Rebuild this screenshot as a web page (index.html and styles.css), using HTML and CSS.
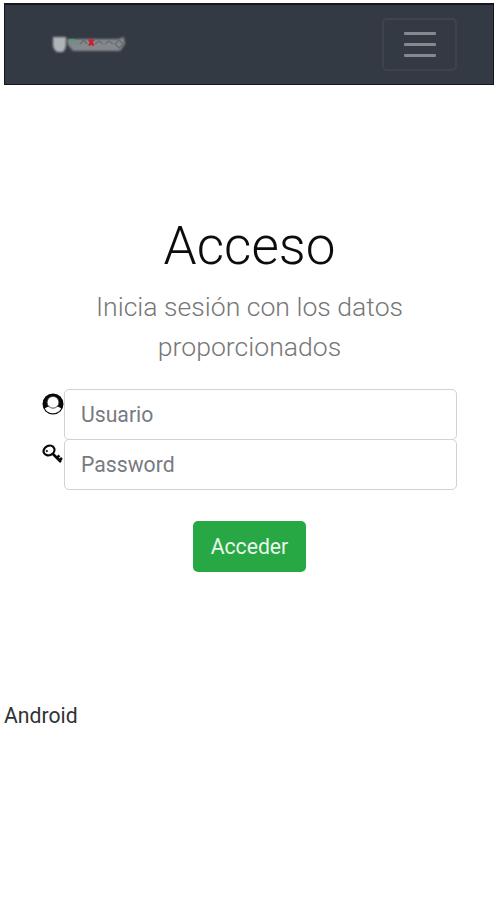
FILE: index.html
```html
<!DOCTYPE html>
<html lang="es">
<head>
<meta charset="utf-8">
<title>Acceso</title>
<link rel="stylesheet" href="styles.css">
</head>
<body>
<header class="navbar">
  <svg class="logo" width="84" height="28" viewBox="0 0 84 28" aria-hidden="true">
    <g class="logo-soft">
      <path d="M6 6h13v8q0 4-3 7h-6q-4-3-4-7z" fill="#b0b3b8"/>
      <path d="M20 8h51l6-2 1 7-5 7H26l-5-6z" fill="#85888d"/>
    </g>
    <g class="logo-detail" fill="none" stroke-width="1.500">
      <path d="M22 9h6M25 9v5M28 11l4 3" stroke="#5a9a78"/>
      <path d="M33 13l4-4 3 4M48 13l4-3 4 3M58 13l4-3 4 3M68 13l4-4 4 4-4 4z" stroke="#686e75"/>
      <path d="M42 8.500l4.500 6M46.500 8.500l-4.500 6" stroke="#d21c2b" stroke-width="2.200"/>
    </g>
  </svg>
  <button class="toggler" type="button" aria-label="Menú">
    <span class="bar"></span><span class="bar"></span><span class="bar"></span>
  </button>
</header>
<main class="login">
  <h1 class="title">Acceso</h1>
  <p class="lead">Inicia sesión con los datos proporcionados</p>
  <form class="form">
    <div class="field">
      <svg class="icon" width="22" height="24" viewBox="0 0 22 24">
        <circle cx="11" cy="11" r="10.500" fill="#080808"/>
        <path d="M2.800 15.500q2.500-2.300 8.200-2.300t8.200 2.300A9.300 9.300 0 0 1 11 20.300a9.300 9.300 0 0 1-8.200-4.800z" fill="#fff"/>
        <circle cx="11" cy="9.300" r="5.900" fill="#fff" stroke="#444" stroke-width=".9"/>
      </svg>
      <input class="input" type="text" placeholder="Usuario">
    </div>
    <div class="field">
      <svg class="icon" width="22" height="24" viewBox="0 0 22 24" fill="none" stroke="#080808">
        <ellipse cx="7" cy="7.500" rx="5.600" ry="4.600" transform="rotate(-25 7 7.500)" stroke-width="2.200"/>
        <circle cx="4.800" cy="8" r=".7" fill="#080808" stroke-width=".8"/>
        <path d="M10.500 10.500l8.500 8.500M14.500 15l3-2.500M17 17.500l3-2.500" stroke-width="2.600"/>
      </svg>
      <input class="input" type="password" placeholder="Password">
    </div>
    <button class="submit" type="button">Acceder</button>
  </form>
</main>
<footer class="platform">Android</footer>
</body>
</html>
```
FILE: styles.css
```css
* { box-sizing: border-box; }
body {
  margin: 0;
  padding: 3px 2px 0 4px;
  background: #fff;
  color: #303336;
  font-family: Roboto, sans-serif;
  font-size: 21.200px;
}
.navbar {
  display: flex;
  justify-content: space-between;
  align-items: center;
  height: 82px;
  padding: 0 36px 0 42px;
  background: #343a43;
  border: 1px solid #15191f;
  border-top-width: 2px;
}
.logo { display: block; }
.logo-soft { filter: blur(1.3px); }
.logo-detail { filter: blur(0.7px); }
.toggler {
  display: flex;
  flex-direction: column;
  justify-content: center;
  align-items: center;
  gap: 8px;
  width: 75px;
  height: 53px;
  padding: 0;
  background: none;
  border: 2px solid #3e434c;
  border-radius: 5px;
}
.bar {
  width: 32px;
  height: 3px;
  border-radius: 1px;
  background: #85898e;
}
.login {
  display: flex;
  flex-direction: column;
  align-items: center;
  padding: 130px 37px 0 38px;
}
.title {
  margin: 0;
  font-size: 53px;
  line-height: 62px;
  font-weight: 300;
  color: #0c0c0c;
}
.lead {
  margin: 10px 0 0;
  width: 340px;
  font-size: 26.600px;
  line-height: 40px;
  font-weight: 300;
  color: #777;
  text-align: center;
}
.form {
  display: flex;
  flex-direction: column;
  align-items: center;
  width: 100%;
  margin-top: 22px;
}
.field {
  display: flex;
  align-items: flex-start;
  width: 100%;
  height: 50px;
}
.icon { flex: none; margin-top: 4px; }
.input {
  flex: 1;
  min-width: 0;
  height: 51px;
  padding: 0 16px;
  border: 1px solid #d0d2d4;
  border-radius: 5px;
  background: #fff;
  font: inherit;
}
.input::placeholder { color: #777b7f; opacity: 1; }
.submit {
  margin-top: 32px;
  width: 113px;
  height: 51px;
  padding: 0 0 1px;
  border: 0;
  border-radius: 5px;
  background: #28a745;
  color: #e8f5eb;
  font: inherit;
}
.platform {
  margin-top: 131px;
  line-height: 26px;
}
```
